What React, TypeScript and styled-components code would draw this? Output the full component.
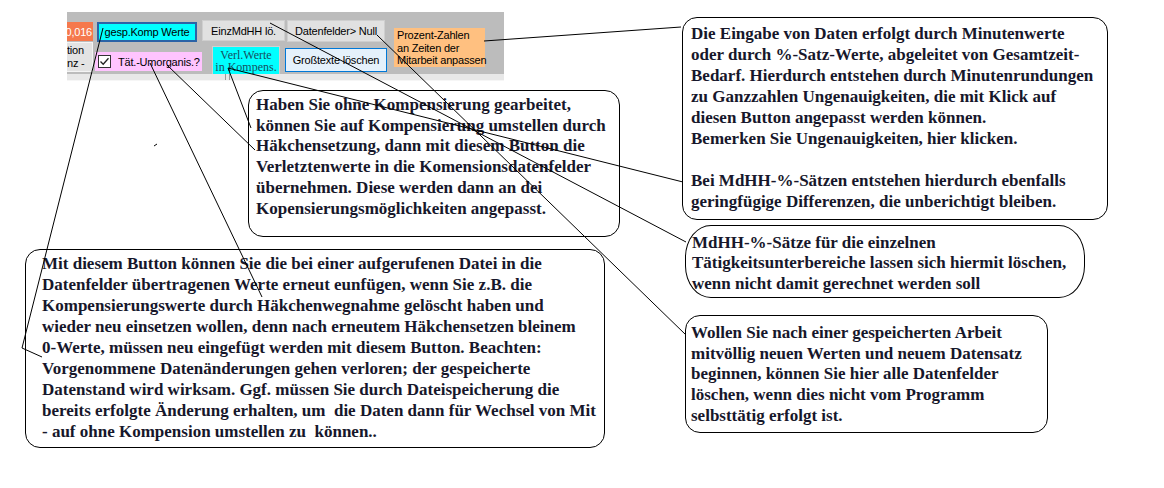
import React from "react";
import styled, { createGlobalStyle } from "styled-components";

const Global = createGlobalStyle`
  html, body {
    margin: 0;
    padding: 0;
    background: #fff;
  }
  body {
    width: 1164px;
    height: 488px;
    overflow: hidden;
    font-family: "Liberation Sans", Arial, sans-serif;
  }
`;

type Note = {
  id: string;
  x: number;
  y: number;
  w: number;
  h: number;
  pad: string;
  lh: number;
  shape?: "oval";
  lines: string[];
};

const notes: Note[] = [
  {
    id: "prozent",
    x: 682,
    y: 17,
    w: 426,
    h: 203,
    pad: "5px 8px",
    lh: 21,
    lines: [
      "Die Eingabe von Daten erfolgt durch Minutenwerte",
      "oder durch %-Satz-Werte, abgeleitet von Gesamtzeit-",
      "Bedarf. Hierdurch entstehen durch Minutenrundungen",
      "zu Ganzzahlen Ungenauigkeiten, die mit Klick auf",
      "diesen Button angepasst werden können.",
      "Bemerken Sie Ungenauigkeiten, hier klicken.",
      "",
      "Bei MdHH-%-Sätzen entstehen hierdurch ebenfalls",
      "geringfügige Differenzen, die unberichtigt bleiben.",
    ],
  },
  {
    id: "verl",
    x: 248,
    y: 90,
    w: 372,
    h: 147,
    pad: "4px 7px",
    lh: 20.7,
    lines: [
      "Haben Sie ohne Kompensierung gearbeitet,",
      "können Sie auf Kompensierung umstellen durch",
      "Häkchensetzung, dann mit diesem Button die",
      "Verletztenwerte in die Komensionsdatenfelder",
      "übernehmen. Diese werden dann an dei",
      "Kopensierungsmöglichkeiten angepasst.",
    ],
  },
  {
    id: "gesp",
    x: 25,
    y: 249,
    w: 580,
    h: 199,
    pad: "3px 16px",
    lh: 21,
    lines: [
      "Mit diesem Button können Sie die bei einer aufgerufenen Datei in die",
      "Datenfelder übertragenen Werte erneut eunfügen, wenn Sie z.B. die",
      "Kompensierungswerte durch Häkchenwegnahme gelöscht haben und",
      "wieder neu einsetzen wollen, denn nach erneutem Häkchensetzen bleinem",
      "0-Werte, müssen neu eingefügt werden mit diesem Button. Beachten:",
      "Vorgenommene Datenänderungen gehen verloren; der gespeicherte",
      "Datenstand wird wirksam. Ggf. müssen Sie durch Dateispeicherung die",
      "bereits erfolgte Änderung erhalten, um  die Daten dann für Wechsel von Mit",
      "- auf ohne Kompension umstellen zu  können..",
    ],
  },
  {
    id: "mdhh",
    x: 685,
    y: 225,
    w: 400,
    h: 73,
    pad: "7px 6px",
    lh: 20.3,
    shape: "oval",
    lines: [
      "MdHH-%-Sätze für die einzelnen",
      "Tätigkeitsunterbereiche lassen sich hiermit löschen,",
      "wenn nicht damit gerechnet werden soll",
    ],
  },
  {
    id: "null",
    x: 685,
    y: 315,
    w: 363,
    h: 118,
    pad: "7px 5px",
    lh: 20.7,
    lines: [
      "Wollen Sie nach einer gespeicherten Arbeit",
      "mitvöllig neuen Werten und neuem Datensatz",
      "beginnen, können Sie hier alle Datenfelder",
      "löschen, wenn dies nicht vom Programm",
      "selbsttätig erfolgt ist.",
    ],
  },
];

// connector lines from the buttons to the notes
const leaders = [
  "M484 41 L681 27",
  "M270 23 L686 242",
  "M377 35 L686 335",
  "M228 68 L683 182",
  "M103 28 L22 348 L42 357",
  "M150 63 L262 297",
  "M167 65 L255 150",
  "M228 68 L251 128",
  "M154 146 L157 144",
];

const App = () => {
  return (
    <Canvas>
      <Global />
      <Toolbar>
        <Col $w={26} $top={10}>
          <ValueBox>0,016</ValueBox>
          <ClipBox>
            <span>tion</span>
            <span>nz -</span>
          </ClipBox>
        </Col>
        <Col $w={107} $top={10} $left={2}>
          <FocusButton>gesp.Komp Werte</FocusButton>
          <CheckRow>
            <CheckBox>
              <svg width="11" height="11" viewBox="0 0 11 11">
                <path d="M1.5 5.5 L4.2 8.3 L9.5 2.2" fill="none" stroke="#222" strokeWidth="1.3" />
              </svg>
            </CheckBox>
            Tät.-Umorganis.?
          </CheckRow>
        </Col>
        <Col $w={83} $top={8}>
          <GreyButton $w={83} $h={21}>EinzMdHH lö.</GreyButton>
          <SerifButton>
            Verl.Werte
            <br />
            in Kompens.
          </SerifButton>
        </Col>
        <Col $w={102} $top={8}>
          <GreyButton $w={98} $h={22} $left={2}>
            Datenfelder&gt; Null
          </GreyButton>
          <BlueButton>Großtexte löschen</BlueButton>
        </Col>
        <Col $w={91} $top={16} $left={7}>
          <OrangeLabel>
            Prozent-Zahlen
            <br />
            an Zeiten der
            <br />
            Mitarbeit anpassen
          </OrangeLabel>
        </Col>
      </Toolbar>
      <Strip>
        <Grip />
      </Strip>

      {notes.map((n) => (
        <Callout key={n.id} $x={n.x} $y={n.y} $w={n.w} $h={n.h} $pad={n.pad} $lh={n.lh} $oval={n.shape === "oval"}>
          {n.lines.map((l, i) => (
            <Line key={i}>{l || "\u00a0"}</Line>
          ))}
        </Callout>
      ))}

      <Leaders width="1164" height="488" viewBox="0 0 1164 488">
        {leaders.map((d, i) => (
          <path key={i} d={d} fill="none" stroke="#000" strokeWidth="1" />
        ))}
      </Leaders>
    </Canvas>
  );
};

export default App;

const Canvas = styled.div`
  position: relative;
  width: 1164px;
  height: 488px;
  overflow: hidden;
  padding-top: 12px;
  box-sizing: border-box;
`;

const Toolbar = styled.div`
  margin-left: 67px;
  width: 437px;
  height: 62px;
  background: #bcbcbc;
  display: flex;
  align-items: flex-start;
  font-size: 11px;
  letter-spacing: -0.2px;
  color: #000;
  overflow: hidden;
`;

const Col = styled.div<{ $w: number; $top: number; $left?: number }>`
  width: ${(p) => p.$w}px;
  padding-top: ${(p) => p.$top}px;
  margin-left: ${(p) => p.$left || 0}px;
  display: flex;
  flex-direction: column;
  flex-shrink: 0;
`;

const ValueBox = styled.div`
  height: 19px;
  background: #f5784c;
  color: #fff;
  display: flex;
  align-items: center;
  justify-content: flex-end;
  padding-right: 1px;
  overflow: hidden;
  white-space: nowrap;
`;

const ClipBox = styled.div`
  margin-top: 1px;
  height: 30px;
  background: #e3e3e3;
  border: 1px solid #f4f4f4;
  border-left: none;
  box-sizing: border-box;
  display: flex;
  flex-direction: column;
  justify-content: center;
  line-height: 13px;
  white-space: nowrap;
  overflow: hidden;
`;

const FocusButton = styled.div`
  margin-left: 2px;
  width: 100px;
  height: 20px;
  box-sizing: border-box;
  background: #00ffff;
  border: 2px solid #2b63a6;
  display: flex;
  align-items: center;
  justify-content: center;
  white-space: nowrap;
`;

const CheckRow = styled.div`
  margin-top: 10px;
  height: 19px;
  background: #ffc4ff;
  display: flex;
  align-items: center;
  gap: 7px;
  padding-left: 3px;
  white-space: nowrap;
`;

const CheckBox = styled.div`
  width: 13px;
  height: 13px;
  box-sizing: border-box;
  border: 1px solid #333;
  background: #fff;
  display: flex;
  align-items: center;
  justify-content: center;
`;

const GreyButton = styled.div<{ $w: number; $h: number; $left?: number }>`
  width: ${(p) => p.$w}px;
  height: ${(p) => p.$h}px;
  margin-left: ${(p) => p.$left || 0}px;
  box-sizing: border-box;
  background: #e1e1e1;
  border: 1px solid #cfcfcf;
  display: flex;
  align-items: center;
  justify-content: center;
  white-space: nowrap;
`;

const SerifButton = styled.div`
  margin: 5px 0 0 10px;
  width: 68px;
  height: 29px;
  box-sizing: border-box;
  background: #00ffff;
  border: 1px solid #d0d0d0;
  font-family: "Liberation Serif", "Times New Roman", serif;
  font-size: 12px;
  letter-spacing: 0;
  line-height: 12px;
  color: #174e5e;
  text-align: center;
  display: flex;
  align-items: center;
  justify-content: center;
  white-space: nowrap;
`;

const BlueButton = styled.div`
  margin-top: 6px;
  width: 102px;
  height: 24px;
  box-sizing: border-box;
  background: #e5f1fb;
  border: 1px solid #0078d7;
  display: flex;
  align-items: center;
  justify-content: center;
  white-space: nowrap;
`;

const OrangeLabel = styled.div`
  height: 39px;
  background: #ffc080;
  padding: 1px 0 0 3px;
  box-sizing: border-box;
  line-height: 12.5px;
  white-space: nowrap;
`;

const Strip = styled.div`
  margin-left: 67px;
  width: 437px;
  height: 6px;
  background: #e8e8e8;
  border-bottom: 1px solid #f6f6f6;
  position: relative;
`;

const Grip = styled.div`
  position: absolute;
  left: 158px;
  top: 0;
  width: 3px;
  height: 6px;
  border-left: 1px solid #9a9a9a;
  border-right: 1px solid #9a9a9a;
`;

const Callout = styled.div<{
  $x: number;
  $y: number;
  $w: number;
  $h: number;
  $pad: string;
  $lh: number;
  $oval: boolean;
}>`
  position: absolute;
  left: ${(p) => p.$x}px;
  top: ${(p) => p.$y}px;
  width: ${(p) => p.$w}px;
  height: ${(p) => p.$h}px;
  padding: ${(p) => p.$pad};
  box-sizing: border-box;
  border: 1px solid #000;
  border-radius: ${(p) => (p.$oval ? "26px / 32px" : "15px")};
  background: #fff;
  font-family: "Liberation Serif", "Times New Roman", serif;
  font-weight: bold;
  font-size: 17px;
  line-height: ${(p) => p.$lh}px;
  color: #17172b;
`;

const Line = styled.div`
  white-space: pre;
`;

const Leaders = styled.svg`
  position: absolute;
  left: 0;
  top: 0;
  pointer-events: none;
`;
